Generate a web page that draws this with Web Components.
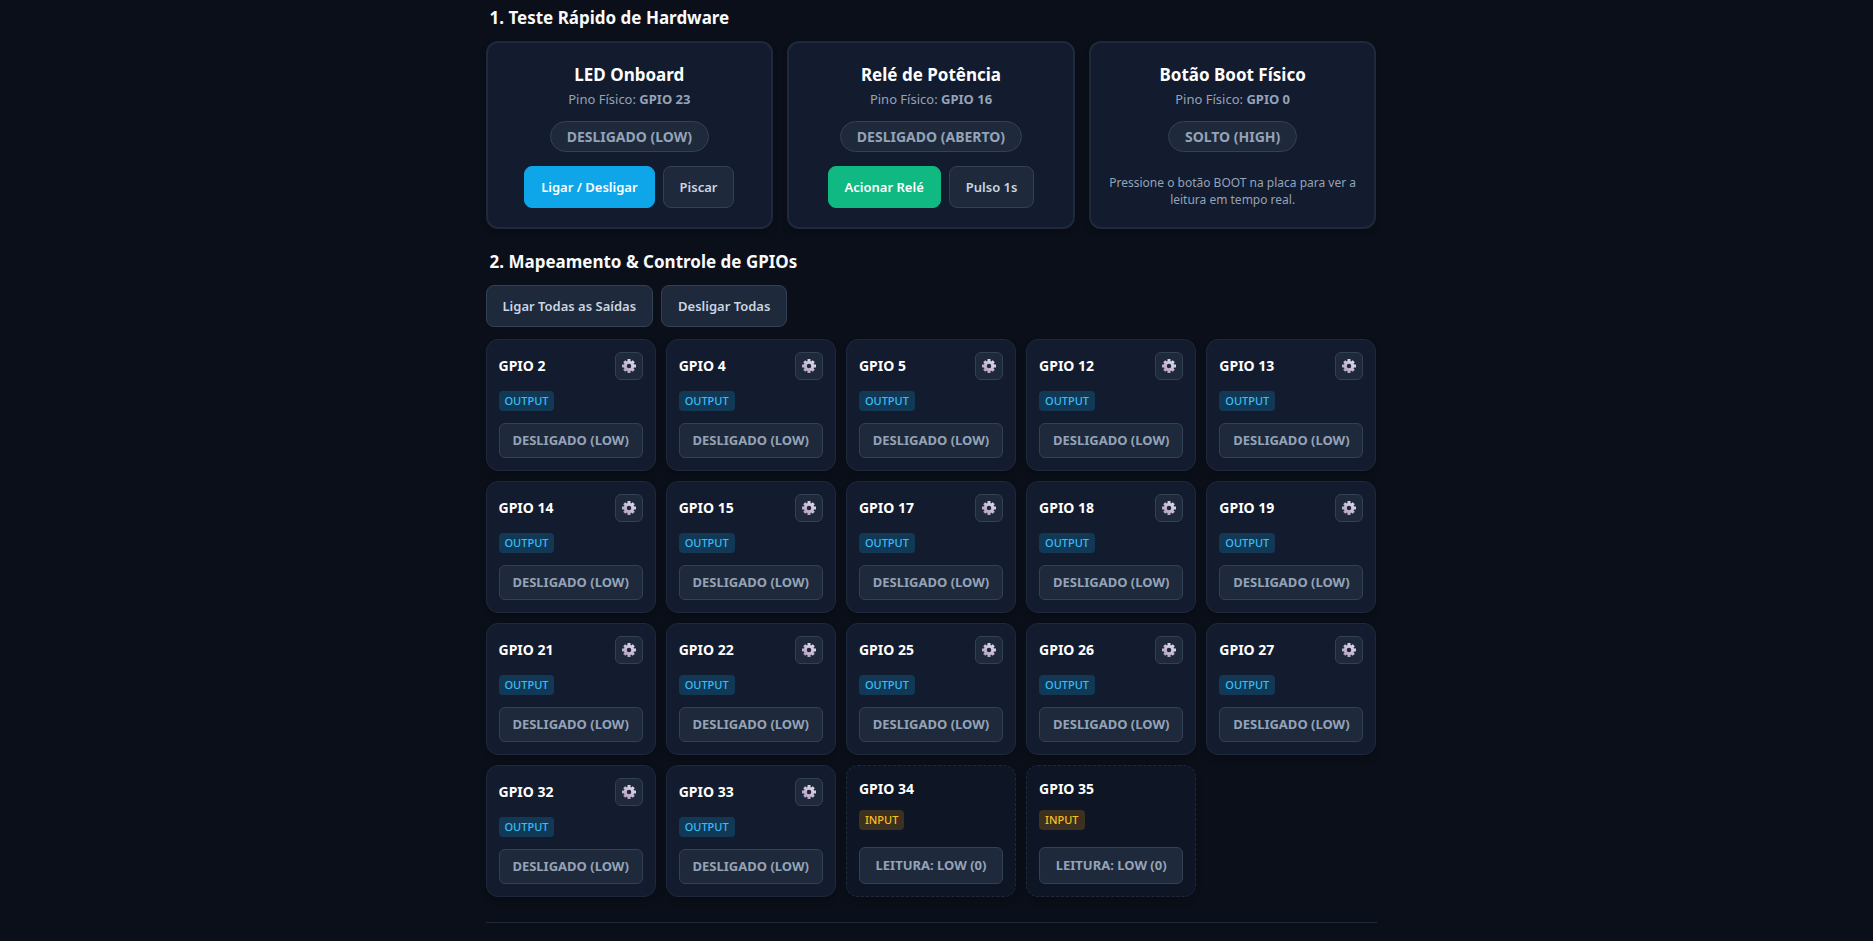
<!DOCTYPE html>
<html lang="pt-BR">
<head>
<meta charset="utf-8">
<title>Painel de GPIOs</title>
<style>
  :root {
    --bg: #0b0f19;
    --card: #131b2e;
    --card-muted: #0e1524;
    --line: #1e293b;
    --raised: #1e293b;
    --raised-line: #334155;
    --text: #ffffff;
    --soft: #cbd5e1;
    --muted: #94a3b8;
    --blue: #0ea5e9;
    --green: #10b981;
    --shadow: 0 4px 6px rgba(0, 0, 0, .2);
  }
  body {
    margin: 0;
    background: var(--bg);
    color: var(--text);
    font: 13px/20px "Noto Sans", "Open Sans", sans-serif;
  }
</style>
</head>
<body>
<gpio-panel></gpio-panel>

<script>
const define = (name, html, setup) => {
  const template = document.createElement('template');
  template.innerHTML = '<style>*{box-sizing:border-box}</style>' + html;
  customElements.define(name, class extends HTMLElement {
    connectedCallback() {
      if (this.shadowRoot) return;
      const root = this.attachShadow({ mode: 'open' });
      root.append(template.content.cloneNode(true));
      if (setup) setup(this, root);
    }
  });
};

define('ui-button', `
  <style>
    :host { display: inline-block; }
    button {
      display: block;
      height: 42px;
      padding: 0 16px;
      border: 1px solid var(--raised-line);
      border-radius: 8px;
      background: var(--raised);
      color: var(--soft);
      font: inherit;
      font-weight: 600;
      white-space: nowrap;
      cursor: pointer;
    }
    :host([kind="primary"]) button { background: var(--blue); border-color: var(--blue); color: #fff; }
    :host([kind="success"]) button { background: var(--green); border-color: var(--green); color: #fff; }
  </style>
  <button type="button"><slot></slot></button>`);

define('section-title', `
  <style>
    :host { display: block; padding-left: 4px; }
    h2 { margin: 0; font-size: 17px; line-height: 24px; font-weight: 700; color: #f8fafc; }
  </style>
  <h2><slot></slot></h2>`);

define('hardware-card', `
  <style>
    :host {
      display: flex;
      flex-direction: column;
      align-items: center;
      padding: 19px 16px;
      border: 2px solid var(--line);
      border-radius: 12px;
      box-sizing: border-box;
      background: var(--card);
      box-shadow: var(--shadow);
      text-align: center;
    }
    h3 { margin: 0; font-size: 17px; line-height: 26px; font-weight: 700; }
    p { margin: 1px 0 11px; line-height: 21px; color: var(--muted); }
    .state {
      height: 31px;
      padding: 0 16px;
      border: 1px solid var(--raised-line);
      border-radius: 16px;
      background: var(--raised);
      color: var(--muted);
      font-size: 14px;
      line-height: 30px;
      font-weight: 700;
    }
    .actions {
      display: flex;
      justify-content: center;
      align-items: flex-end;
      gap: 8px;
      min-height: 42px;
      margin-top: 14px;
      color: var(--muted);
      font-size: 12px;
      line-height: 17px;
    }
    ::slotted(ui-button) { font-size: 13px; }
  </style>
  <h3></h3>
  <p>Pino Físico: <b></b></p>
  <div class="state"></div>
  <div class="actions"><slot></slot></div>`,
  (host, root) => {
    root.querySelector('h3').textContent = host.getAttribute('name');
    root.querySelector('b').textContent = host.getAttribute('pin');
    root.querySelector('.state').textContent = host.getAttribute('state');
  });

define('gear-button', `
  <style>
    :host { display: block; }
    button {
      display: grid;
      place-items: center;
      width: 28px;
      height: 28px;
      padding: 0;
      border: 1px solid var(--raised-line);
      border-radius: 6px;
      background: var(--raised);
      cursor: pointer;
    }
    svg { display: block; width: 14px; height: 14px; }
  </style>
  <button type="button" aria-label="Configurar">
    <svg viewBox="0 0 28 28" aria-hidden="true">
      <defs>
        <linearGradient id="g" gradientUnits="userSpaceOnUse" x1="22" y1="4" x2="6" y2="24">
          <stop offset="0" stop-color="#e0d8e8"/><stop offset="1" stop-color="#b5a2c6"/>
        </linearGradient>
      </defs>
      <g stroke="url(#g)" fill="none">
        <circle cx="14" cy="14" r="7.500" stroke-width="6"/>
        <path stroke-width="6" d="M13.990 5L14.010 0M13.990 23l.020 5M5 13.990L0 14.010M23 13.990l5 .020M7.600 7.600L4.500 4.500M20.400 20.400l3.100 3.100M20.400 7.600l3.100-3.100M7.600 20.400l-3.100 3.100"/>
      </g>
    </svg>
  </button>`);

define('gpio-card', `
  <style>
    :host {
      display: flex;
      flex-direction: column;
      align-items: stretch;
      min-height: 132px;
      padding: 12px;
      border: 1px solid var(--line);
      border-radius: 12px;
      box-sizing: border-box;
      background: var(--card);
      box-shadow: var(--shadow);
    }
    :host([mode="input"]) { border-style: dashed; background: var(--card-muted); }
    header { display: flex; align-items: center; justify-content: space-between; }
    h3 { margin: 0; font-size: 14px; line-height: 22px; font-weight: 700; }
    .mode {
      align-self: flex-start;
      margin: 11px 0 12px;
      padding: 0 6px;
      border-radius: 4px;
      background: rgba(14, 165, 233, .22);
      color: #38bdf8;
      font-size: 11px;
      line-height: 20px;
      font-weight: 500;
    }
    :host([mode="input"]) .mode { margin-top: 10px; background: rgba(245, 158, 11, .2); color: #fbbf24; }
    .level {
      display: block;
      height: 35px;
      margin: auto 0 0;
      padding: 0;
      border: 1px solid var(--raised-line);
      border-radius: 6px;
      background: var(--raised);
      color: var(--muted);
      font: inherit;
      font-weight: 700;
      line-height: 33px;
      text-align: center;
    }
    output.level { height: 37px; line-height: 35px; }
    button { cursor: pointer; }
  </style>
  <header><h3></h3></header>
  <span class="mode"></span>`,
  (host, root) => {
    const input = host.getAttribute('mode') === 'input';
    root.querySelector('h3').textContent = 'GPIO ' + host.getAttribute('pin');
    root.querySelector('.mode').textContent = input ? 'INPUT' : 'OUTPUT';
    if (!input) root.querySelector('header').append(document.createElement('gear-button'));
    const level = document.createElement(input ? 'output' : 'button');
    if (!input) level.type = 'button';
    level.className = 'level';
    level.textContent = input ? 'LEITURA: LOW (0)' : 'DESLIGADO (LOW)';
    root.append(level);
  });

define('gpio-panel', `
  <style>
    /* The right padding leaves room for a slim scrollbar. */
    :host { display: block; padding: 6px 11px 16px 0; }
    main { max-width: 891px; margin: 0 auto; }
    .hardware { display: grid; grid-template-columns: repeat(3, 1fr); gap: 14px; margin: 11px 0 21px; }
    .toolbar { display: flex; flex-wrap: wrap; gap: 8px; margin: 11px 0 12px; }
    .pins { display: grid; grid-template-columns: repeat(5, 1fr); gap: 10px; }
    hr { margin: 25px 0 0; border: 0; border-top: 1px solid var(--line); }
    @media (max-width: 760px) {
      main { margin: 0 12px; }
      .hardware { grid-template-columns: 1fr; }
      .pins { grid-template-columns: repeat(auto-fill, minmax(150px, 1fr)); }
    }
  </style>
  <main>
    <section-title>1. Teste Rápido de Hardware</section-title>
    <div class="hardware">
      <hardware-card name="LED Onboard" pin="GPIO 23" state="DESLIGADO (LOW)">
        <ui-button kind="primary">Ligar / Desligar</ui-button>
        <ui-button>Piscar</ui-button>
      </hardware-card>
      <hardware-card name="Relé de Potência" pin="GPIO 16" state="DESLIGADO (ABERTO)">
        <ui-button kind="success">Acionar Relé</ui-button>
        <ui-button>Pulso 1s</ui-button>
      </hardware-card>
      <hardware-card name="Botão Boot Físico" pin="GPIO 0" state="SOLTO (HIGH)">
        <span>Pressione o botão BOOT na placa para ver a leitura em tempo real.</span>
      </hardware-card>
    </div>
    <section-title>2. Mapeamento &amp; Controle de GPIOs</section-title>
    <div class="toolbar">
      <ui-button>Ligar Todas as Saídas</ui-button>
      <ui-button>Desligar Todas</ui-button>
    </div>
    <div class="pins"></div>
    <hr>
  </main>`,
  (host, root) => {
    const pins = root.querySelector('.pins');
    const add = (pin, mode) => {
      const card = document.createElement('gpio-card');
      card.setAttribute('pin', pin);
      card.setAttribute('mode', mode);
      pins.append(card);
    };
    [2, 4, 5, 12, 13, 14, 15, 17, 18, 19, 21, 22, 25, 26, 27, 32, 33].forEach(p => add(p, 'output'));
    [34, 35].forEach(p => add(p, 'input'));
  });
</script>
</body>
</html>
